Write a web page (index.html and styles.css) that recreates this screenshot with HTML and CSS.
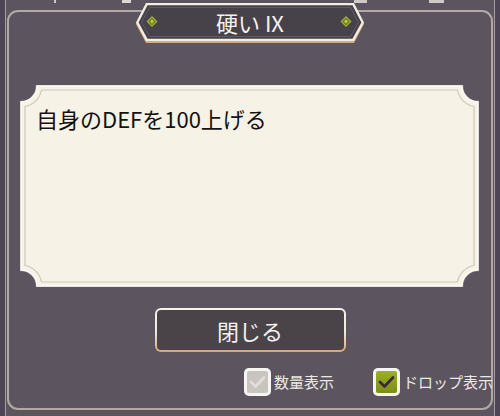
FILE: index.html
```html
<!DOCTYPE html>
<html lang="ja">
<head>
<meta charset="utf-8">
<title>硬い IX</title>
<link rel="stylesheet" href="styles.css">
</head>
<body>
<div class="window">
  <div class="topbar">
    <span class="mark mark-a"></span>
    <span class="mark mark-b"></span>
    <span class="mark mark-c"></span>
    <span class="mark mark-d"></span>
  </div>
  <div class="panel">
    <div class="plate">
      <svg class="plate-bg" width="228" height="40" viewBox="0 0 228 40" aria-hidden="true">
        <polygon points="10,2 218,2 228,21 218,40 10,40 0,21" fill="#d7ab7b"/>
        <polygon points="10,0 218,0 228,19.5 218,38 10,38 0,19.5" fill="#f3eee4"/>
        <polygon points="11.5,2.2 216.5,2.2 225.4,19.5 216.5,35.8 11.5,35.8 2.6,19.5" fill="#47424a"/>
        <polygon points="13.5,4.5 214.5,4.5 222.3,19.5 214.5,33.5 13.5,33.5 5.7,19.5" fill="none" stroke="#605a62" stroke-width="1"/>
        <g transform="translate(16,18.5)">
          <polygon points="0,-5.5 5.5,0 0,5.5 -5.5,0" fill="#a5b636"/>
          <polygon points="0,-3.2 3.2,0 0,3.2 -3.2,0" fill="none" stroke="#6c7a20" stroke-width="1.1"/>
          <polygon points="0,-1.2 1.2,0 0,1.2 -1.2,0" fill="#c3d052"/>
        </g>
        <g transform="translate(210,18.5)">
          <polygon points="0,-5.5 5.5,0 0,5.5 -5.5,0" fill="#a5b636"/>
          <polygon points="0,-3.2 3.2,0 0,3.2 -3.2,0" fill="none" stroke="#6c7a20" stroke-width="1.1"/>
          <polygon points="0,-1.2 1.2,0 0,1.2 -1.2,0" fill="#c3d052"/>
        </g>
      </svg>
      <h1 class="plate-title">硬い IX</h1>
    </div>

    <div class="desc">
      <svg class="desc-bg" width="459" height="202" viewBox="0 0 459 202" aria-hidden="true">
        <path d="M17,1 H442 A16,16 0 0 0 458,17 V185 A16,16 0 0 0 442,201 H17 A16,16 0 0 0 1,185 V17 A16,16 0 0 0 17,1 Z" fill="#f6f2e6" stroke="#a79ea0" stroke-width="2.5"/>
        <path d="M17,1 H442 A16,16 0 0 0 458,17 V185 A16,16 0 0 0 442,201 H17 A16,16 0 0 0 1,185 V17 A16,16 0 0 0 17,1 Z" fill="#f6f2e6" stroke="#fffdf7" stroke-width="1.3"/>
        <path d="M21.5,5 H437.5 A20.5,20.5 0 0 0 454,21.5 V180.5 A20.5,20.5 0 0 0 437.5,197 H21.5 A20.5,20.5 0 0 0 5,180.5 V21.5 A20.5,20.5 0 0 0 21.5,5 Z" fill="none" stroke="#cfc7ba" stroke-width="1.2"/>
      </svg>
      <p class="desc-text">自身のDEFを100上げる</p>
    </div>

    <button class="close-btn" type="button">閉じる</button>

    <div class="options">
      <label class="opt">
        <span class="box box-off">
          <svg width="21" height="22" viewBox="0 0 21 22" aria-hidden="true"><path d="M4,11 L8.5,15.5 L17,6.5" fill="none" stroke="#e2ded9" stroke-width="2.6" stroke-linecap="round" stroke-linejoin="round"/></svg>
        </span>
        <span class="opt-label">数量表示</span>
      </label>
      <label class="opt">
        <span class="box box-on">
          <svg width="21" height="22" viewBox="0 0 21 22" aria-hidden="true"><path d="M4,11 L8.5,15.5 L17,6.5" fill="none" stroke="#3a2b3b" stroke-width="2.8" stroke-linecap="round" stroke-linejoin="round"/></svg>
        </span>
        <span class="opt-label">ドロップ表示</span>
      </label>
    </div>
  </div>
</div>
</body>
</html>
```

FILE: styles.css
```css
html, body {
  margin: 0;
  padding: 0;
}

body {
  width: 500px;
  height: 416px;
  overflow: hidden;
  background: #4e4556;
  font-family: "Noto Sans CJK JP", "Noto Sans", sans-serif;
}

.window {
  box-sizing: border-box;
  height: 416px;
  margin: 0 5px;
  padding: 0 1px;
  border-left: 1px solid #a59c9c;
  border-right: 1px solid #a59c9c;
  background: #5c5560;
}

.topbar {
  height: 10px;
  display: flex;
  align-items: flex-start;
}

.mark {
  display: block;
  height: 3px;
  background: #cfc8c4;
}

.mark-a { width: 2px; margin-left: 47px; }
.mark-b { width: 9px; margin-left: 66px; background: #ddd6d0; }
.mark-c { width: 13px; margin-left: 223px; }
.mark-d { width: 15px; margin-left: 62px; }

.panel {
  box-sizing: border-box;
  height: 400px;
  border: 2px solid #b2a9a3;
  border-radius: 11px;
  display: flex;
  flex-direction: column;
}

.plate {
  position: relative;
  align-self: center;
  width: 228px;
  height: 40px;
  margin-top: -9px;
}

.plate-bg {
  position: absolute;
  left: 0;
  top: 0;
}

.plate-title {
  position: relative;
  margin: 0;
  height: 38px;
  line-height: 38px;
  text-align: center;
  font-size: 22px;
  font-weight: 400;
  color: #f6f3ef;
}

.desc {
  position: relative;
  box-sizing: border-box;
  height: 202px;
  margin: 42px 12px 0 11px;
  padding: 18px 16px;
}

.desc-bg {
  position: absolute;
  left: 0;
  top: 0;
}

.desc-text {
  position: relative;
  margin: 0;
  font-size: 22px;
  font-weight: 400;
  line-height: 30px;
  color: #141112;
}

.close-btn {
  align-self: center;
  box-sizing: border-box;
  width: 191px;
  height: 44px;
  margin-top: 21px;
  padding: 0;
  border: 2px solid transparent;
  border-radius: 6px;
  background:
    linear-gradient(#4a4449, #4a4449) padding-box,
    linear-gradient(#f6f2ee, #efe7df 55%, #d4a77a) border-box;
  font-family: inherit;
  font-size: 22px;
  line-height: 40px;
  color: #f3f0ec;
}

.options {
  display: flex;
  align-items: center;
  gap: 39px;
  margin-top: 16px;
  padding-left: 235px;
}

.opt {
  display: flex;
  align-items: center;
  gap: 3px;
}

.box {
  box-sizing: border-box;
  width: 27px;
  height: 28px;
  padding: 3px;
  border-radius: 5px;
  background: #f7f5f2;
}

.box svg {
  display: block;
  border-radius: 2px;
}

.box-off svg {
  background: #c9c4c0;
}

.box-on svg {
  background: linear-gradient(#9bb025, #7c8e18);
}

.opt-label {
  font-size: 15px;
  line-height: 20px;
  color: #ece8e4;
  white-space: nowrap;
}
```
